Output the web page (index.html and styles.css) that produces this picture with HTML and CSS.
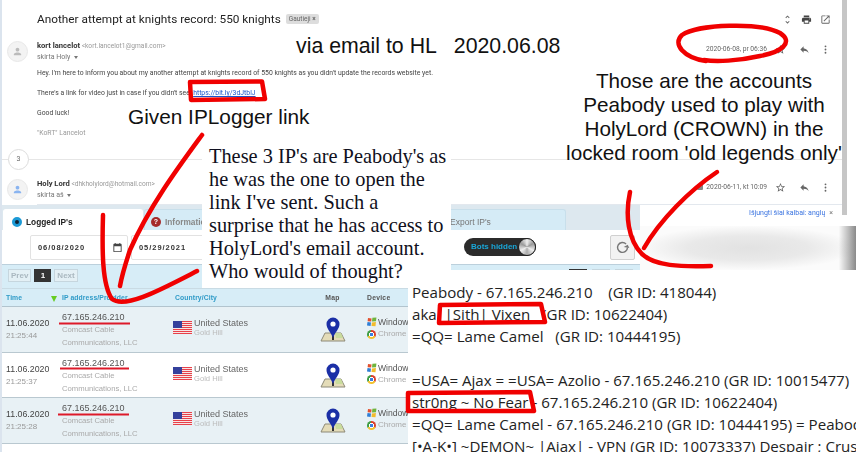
FILE: index.html
```html
<!DOCTYPE html>
<html lang="en">
<head>
    <meta charset="UTF-8">
    <title>Given IPLogger link</title>
    <link rel="stylesheet" href="styles.css">
</head>
<body>
    <svg class="sprites" width="0" height="0">
        <symbol id="i-star" viewBox="0 0 24 24"><path d="M22 9.24l-7.19-.62L12 2 9.19 8.63 2 9.24l5.46 4.73L5.82 21 12 17.27 18.18 21l-1.63-7.03L22 9.24zM12 15.4l-3.76 2.27 1-4.28-3.32-2.88 4.38-.38L12 6.1l1.71 4.04 4.38.38-3.32 2.88 1 4.28L12 15.4z"/></symbol>
        <symbol id="i-reply" viewBox="0 0 24 24"><path d="M10 9V5l-7 7 7 7v-4.1c5 0 8.5 1.6 11 5.1-1-5-4-10-11-11z"/></symbol>
        <symbol id="i-more" viewBox="0 0 24 24"><circle cx="12" cy="5" r="2"/><circle cx="12" cy="12" r="2"/><circle cx="12" cy="19" r="2"/></symbol>
        <symbol id="i-print" viewBox="0 0 24 24"><path d="M19 8H5c-1.66 0-3 1.34-3 3v6h4v4h12v-4h4v-6c0-1.66-1.34-3-3-3zm-3 11H8v-5h8v5zm3-7c-.55 0-1-.45-1-1s.45-1 1-1 1 .45 1 1-.45 1-1 1zm-1-9H6v4h12V3z"/></symbol>
        <symbol id="i-open" viewBox="0 0 24 24"><path d="M19 19H5V5h7V3H5c-1.11 0-2 .9-2 2v14c0 1.1.89 2 2 2h14c1.1 0 2-.9 2-2v-7h-2v7zM14 3v2h3.59l-9.83 9.83 1.41 1.41L19 6.41V10h2V3h-7z"/></symbol>
        <symbol id="i-unfold" viewBox="0 0 24 24"><path d="M12 5.83L15.17 9l1.41-1.41L12 3 7.41 7.59 8.83 9 12 5.83zm0 12.34L8.83 15l-1.41 1.41L12 21l4.59-4.59L15.17 15 12 18.17z"/></symbol>
        <symbol id="i-person" viewBox="0 0 24 24"><path d="M12 12c2.21 0 4-1.79 4-4s-1.79-4-4-4-4 1.79-4 4 1.79 4 4 4zm0 2c-2.67 0-8 1.34-8 4v2h16v-2c0-2.66-5.33-4-8-4z"/></symbol>
        <symbol id="i-calendar" viewBox="0 0 24 24"><path d="M19 4h-1V2h-2v2H8V2H6v2H5c-1.1 0-2 .9-2 2v14c0 1.1.9 2 2 2h14c1.1 0 2-.9 2-2V6c0-1.1-.9-2-2-2zm0 16H5V9h14v11z"/></symbol>
        <symbol id="i-pin" viewBox="0 0 26 26">
            <path d="M5 16 L21 16 L25 24 L1 24 Z" fill="#e4dcb8" stroke="#8d8a78" stroke-width="1"/>
            <path d="M15 16 L21 16 L23 21 L16 21 Z" fill="#c9dc9c"/>
            <path d="M12 19 h2 v4 h-2 z" fill="#333"/>
            <path d="M13 21 C11 15 6.500 12 6.500 7 A6.500 6.500 0 0 1 19.500 7 C19.500 12 15 15 13 21 Z" fill="#1b2fa6"/>
            <circle cx="13" cy="7" r="2.600" fill="#fff"/>
        </symbol>
        <symbol id="i-windows" viewBox="0 0 10 10">
            <path d="M1 1 L4.600 1.400 L4.200 4.600 L.6 4.200 Z" fill="#e2502e"/>
            <path d="M5.400 .8 L9.400 .4 L9 4.200 L5 4.600 Z" fill="#6fb43c"/>
            <path d="M.5 5 L4 5.400 L3.600 9 L0 8.600 Z" fill="#2f7fd6"/>
            <path d="M4.900 5.400 L8.900 5 L8.500 9.200 L4.500 9 Z" fill="#f2bb2c"/>
        </symbol>
    </svg>

    <main class="desktop">
        <section class="mail">
            <div class="subject-row">
                <h1 class="subject">Another attempt at knights record: 550 knights</h1>
                <span class="chip">Gautieji <b>×</b></span>
                <div class="top-icons">
                    <svg class="icon"><use href="#i-unfold"/></svg>
                    <svg class="icon dark"><use href="#i-print"/></svg>
                    <svg class="icon"><use href="#i-open"/></svg>
                </div>
            </div>

            <div class="message">
                <div class="avatar"><svg class="icon grey"><use href="#i-person"/></svg></div>
                <div class="message-main">
                    <div class="sender"><b>kort lancelot</b> <span>&lt;kort.lancelot1@gmail.com&gt;</span></div>
                    <div class="recipient">skirta Holy <i class="caret"></i></div>
                </div>
                <div class="message-tools">
                    <span class="msg-date">2020-06-08, pr 06:36</span>
                    <svg class="icon star"><use href="#i-star"/></svg>
                    <svg class="icon"><use href="#i-reply"/></svg>
                    <svg class="icon"><use href="#i-more"/></svg>
                </div>
            </div>

            <div class="mail-body">
                <p>Hey. I'm here to inform you about my another attempt at knights record of 550 knights as you didn't update the records website yet.</p>
                <p>There's a link for video just in case if you didn't see: <a href="#">https://bit.ly/3dJtblJ</a></p>
                <p>Good luck!</p>
                <p class="signature">"KoRT" Lancelot</p>
            </div>

            <div class="collapsed"><span class="count">3</span></div>

            <div class="message second">
                <div class="avatar"><svg class="icon blue"><use href="#i-person"/></svg></div>
                <div class="message-main">
                    <div class="sender"><b>Holy Lord</b> <span>&lt;dhkholylord@hotmail.com&gt;</span></div>
                    <div class="recipient">skirta aš <i class="caret"></i></div>
                </div>
                <div class="message-tools">
                    <i class="attachment"></i>
                    <span class="msg-date">2020-06-11, kt 10:09</span>
                    <svg class="icon star"><use href="#i-star"/></svg>
                    <svg class="icon"><use href="#i-reply"/></svg>
                    <svg class="icon"><use href="#i-more"/></svg>
                </div>
            </div>

            <div class="translate-bar"><a href="#">Išjungti šiai kalbai: anglų</a><span>×</span></div>
            <div class="scrollbar"></div>
        </section>

        <div class="mail-shadow"></div>

        <section class="logger">
            <div class="tabs">
                <div class="tab active"><span class="tab-dot"></span>Logged IP's</div>
                <div class="tab info"><span class="tab-q">?</span>Information</div>
                <div class="tab export">Export IP's</div>
            </div>
            <div class="filters">
                <div class="date-input">06/08/2020 <svg class="icon dark"><use href="#i-calendar"/></svg></div>
                <div class="date-input">05/29/2021</div>
                <div class="toggle">Bots hidden<span class="knob"></span></div>
                <div class="refresh">
                    <svg viewBox="0 0 24 24"><path d="M19 12a7 7 0 1 1-2-5" fill="none" stroke="#777" stroke-width="2"/><path d="M14 12 L22 12 L19 8 Z" fill="#777" transform="rotate(10 18 10)"/></svg>
                </div>
            </div>
            <div class="pager">
                <span class="page-btn">Prev</span>
                <span class="page-btn current">1</span>
                <span class="page-btn">Next</span>
                <div class="pager-right">
                    <span class="page-btn current"></span>
                    <span class="page-btn"></span>
                    <span class="page-btn"></span>
                </div>
            </div>
            <div class="ip-row ip-head">
                <div class="time-head">Time <i class="sort"></i></div>
                <div>IP address/Provider</div>
                <div class="country-head">Country/City</div>
                <div class="map-cell dark-head">Map</div>
                <div class="device-cell dark-head">Device</div>
            </div>

            <div class="ip-row shaded">
                <div><div class="date">11.06.2020</div><div class="clock">21:25:44</div></div>
                <div><div class="ip">67.165.246.210</div><div class="isp">Comcast Cable</div><div class="isp">Communications, LLC</div></div>
                <div class="country"><span class="flag"></span><div><div class="country-name">United States</div><div class="city">Gold Hill</div></div></div>
                <div class="map-cell"><svg class="pin"><use href="#i-pin"/></svg></div>
                <div class="device-cell"><div class="os"><svg class="win"><use href="#i-windows"/></svg>Windows</div><div class="browser"><span class="chrome"></span>Chrome</div></div>
            </div>
            <div class="ip-row">
                <div><div class="date">11.06.2020</div><div class="clock">21:25:37</div></div>
                <div><div class="ip">67.165.246.210</div><div class="isp">Comcast Cable</div><div class="isp">Communications, LLC</div></div>
                <div class="country"><span class="flag"></span><div><div class="country-name">United States</div><div class="city">Gold Hill</div></div></div>
                <div class="map-cell"><svg class="pin"><use href="#i-pin"/></svg></div>
                <div class="device-cell"><div class="os"><svg class="win"><use href="#i-windows"/></svg>Windows</div><div class="browser"><span class="chrome"></span>Chrome</div></div>
            </div>
            <div class="ip-row shaded">
                <div><div class="date">11.06.2020</div><div class="clock">21:25:28</div></div>
                <div><div class="ip">67.165.246.210</div><div class="isp">Comcast Cable</div><div class="isp">Communications, LLC</div></div>
                <div class="country"><span class="flag"></span><div><div class="country-name">United States</div><div class="city">Gold Hill</div></div></div>
                <div class="map-cell"><svg class="pin"><use href="#i-pin"/></svg></div>
                <div class="device-cell"><div class="os"><svg class="win"><use href="#i-windows"/></svg>Windows</div><div class="browser"><span class="chrome"></span>Chrome</div></div>
            </div>
        </section>

        <aside class="note">These 3 IP's are Peabody's as<br>he was the one to open the<br>link I've sent. Such a<br>surprise that he has access to<br>HolyLord's email account.<br>Who would of thought?</aside>

        <section class="accounts">
            <p>Peabody - 67.165.246.210 &nbsp;&nbsp; (GR ID: 418044)</p>
            <p>aka &nbsp;|Sith| Vixen &nbsp; (GR ID: 10622404)</p>
            <p>=QQ= Lame Camel &nbsp; (GR ID: 10444195)</p>
            <p>&nbsp;</p>
            <p>=USA= Ajax = =USA= Azolio - 67.165.246.210 (GR ID: 10015477)</p>
            <p>str0ng ~ No Fear - 67.165.246.210 (GR ID: 10622404)</p>
            <p>=QQ= Lame Camel - 67.165.246.210 (GR ID: 10444195) = Peabody</p>
            <p>[•A-K•] ~DEMON~ |Ajax| - VPN (GR ID: 10073337) Despair ; Crusader</p>
        </section>

        <div class="caption caption-mail">via email to HL &nbsp; 2020.06.08</div>
        <div class="caption caption-link">Given IPLogger link</div>
        <div class="caption caption-accounts">Those are the accounts<br>Peabody used to play with<br>HolyLord (CROWN) in the<br>locked room 'old legends only'</div>

        <svg class="marks" viewBox="0 0 856 452">
            <g class="thick">
                <path d="M706 61 C684 58 672 44 682 35 C698 24 760 22 780 33 C794 42 782 52 760 56 C738 61 716 62 704 60"/>
                <path d="M190 82 L262 81.500 L265 99 L191 100 Z"/>
                <path d="M202 135 C180 165 150 205 130 250 C126 262 122 275 120 286"/>
                <path d="M103 215 C102 250 102 285 112 299 C125 309 160 290 197 271"/>
                <path d="M717 172 C690 190 660 220 644 248"/>
                <path d="M630 192 C625 215 628 240 642 254 C655 266 680 267 711 266"/>
                <path d="M440 305 L541 304 L545 322 L439 323 Z"/>
                <path d="M408 393 L530 392 L534 411 L408 411 Z"/>
            </g>
            <g class="thin">
                <path d="M59 323.500 L130 323.500"/>
                <path d="M60 368.500 L129 368.500"/>
                <path d="M58 414.500 L129 414.500"/>
            </g>
        </svg>
    </main>
</body>
</html>
```

FILE: styles.css
```css
* {
    box-sizing: border-box;
}

body {
    margin: 0;
    background-color: white;
    font-family: Roboto, Arial, sans-serif;
}

.sprites {
    position: absolute;
}

.desktop {
    position: relative;
    width: 856px;
    height: 452px;
    overflow: hidden;
    background-color: white;
}

.icon {
    width: 11px;
    height: 11px;
    fill: #666;
    flex: none;
}

.icon.dark {
    fill: #444;
}

.icon.grey {
    fill: #bbb;
}

.icon.blue {
    fill: #8ab4f0;
}

.icon.star {
    margin-right: 3px;
}

/* Mail window */
.mail {
    position: absolute;
    left: 0;
    top: 0;
    width: 856px;
    height: 226px;
    padding: 1px 0 0 37px;
    border-left: 2px solid #dbe4ee;
    background-color: white;
    filter: blur(0.4px);
}

.subject-row {
    display: flex;
    align-items: center;
    height: 36px;
    margin-left: -2px;
    padding-right: 25px;
}

.subject {
    margin: 0;
    font-size: 11.8px;
    font-weight: 400;
    color: #222;
}

.chip {
    margin-left: 5px;
    padding: 1px 3px;
    background-color: #ddd;
    border-radius: 2px;
    font-size: 6.5px;
    color: #666;
}

.top-icons {
    display: flex;
    gap: 8px;
    margin-left: auto;
}

.message {
    position: relative;
    display: flex;
    height: 26px;
    margin-left: -2px;
    padding-top: 4px;
    padding-right: 25px;
}

.avatar {
    position: absolute;
    left: -30px;
    top: 4px;
    width: 21px;
    height: 21px;
    border-radius: 50%;
    background-color: #f3f3f3;
    border: 1px solid #e8e8e8;
    display: flex;
    align-items: center;
    justify-content: center;
}

.sender {
    font-size: 6.6px;
    line-height: 10px;
    color: #999;
}

.sender b {
    font-size: 7.6px;
    color: #333;
}

.recipient {
    font-size: 7px;
    line-height: 12px;
    color: #777;
}

.caret {
    display: inline-block;
    margin-left: 2px;
    border: 2px solid transparent;
    border-top: 3px solid #777;
    border-bottom: 0;
    vertical-align: middle;
}

.message-tools {
    display: flex;
    align-items: center;
    gap: 10px;
    height: 16px;
    margin-left: auto;
}

.msg-date {
    margin-right: -2px;
    font-size: 6.7px;
    color: #666;
}

.attachment {
    width: 6px;
    height: 6px;
    margin-right: -7px;
    border-radius: 1px;
    background-color: #888;
}

.mail-body {
    height: 92px;
    margin-left: -2px;
    padding-top: 5px;
    font-size: 6.85px;
    color: #444;
}

.mail-body p {
    margin: 0 0 10px;
    line-height: 10px;
}

.mail-body a {
    color: #1a55cc;
}

.signature {
    color: #999;
}

.collapsed {
    position: relative;
    height: 20px;
    margin-left: -37px;
    margin-right: 14px;
}

.collapsed::before {
    content: "";
    position: absolute;
    left: 0;
    right: 0;
    top: 4px;
    border-top: 1px solid #e6e6e6;
}

.count {
    position: absolute;
    left: 6px;
    top: -6px;
    width: 21px;
    height: 21px;
    border: 1px solid #ddd;
    border-radius: 50%;
    background-color: white;
    font-size: 7px;
    line-height: 19px;
    text-align: center;
    color: #666;
}

.message.second {
    height: 30px;
    border-bottom: 1px solid #e3e8ee;
    margin-right: 14px;
    padding-right: 11px;
}

.translate-bar {
    display: flex;
    justify-content: flex-end;
    align-items: center;
    gap: 4px;
    height: 14px;
    margin: 0 23px 0 0;
    padding-top: 1px;
    font-size: 7px;
    color: #777;
}

.translate-bar a {
    color: #3b74e0;
    text-decoration: none;
}

.scrollbar {
    position: absolute;
    right: 9px;
    top: 0;
    width: 5px;
    height: 215px;
    background-color: #c6c6c6;
}

.mail-shadow {
    position: absolute;
    left: 640px;
    top: 226px;
    width: 216px;
    height: 44px;
    background:
        linear-gradient(90deg, transparent 92%, #8a8a8a 100%),
        radial-gradient(ellipse 110px 22px at 50% 50%, #e2e2e2 0%, #e9e9e9 55%, #fbfbfb 100%);
}

/* IP logger window */
.logger {
    position: absolute;
    left: 0;
    top: 205px;
    width: 640px;
    height: 247px;
    background-color: white;
    border-left: 2px solid #dbe4ee;
    font-family: "Liberation Sans", Arial, sans-serif;
    filter: blur(0.4px);
}

.tabs {
    display: flex;
    gap: 1px;
    height: 25px;
    padding: 4px 0 0 1px;
    background-color: #dde8ef;
}

.tab {
    display: flex;
    align-items: center;
    padding-top: 3px;
    padding-left: 8px;
    border: 1px solid #c8dfeb;
    border-bottom: 0;
    border-radius: 3px 3px 0 0;
    background-color: #d5ebf6;
    font-size: 8.3px;
    font-weight: bold;
    color: #888;
}

.tab.active {
    width: 140px;
    background-color: white;
    color: #222;
    border-color: white;
}

.tab.info {
    width: 260px;
    padding-left: 6px;
}

.tab.export {
    width: 161px;
    padding-left: 44px;
    font-size: 8.5px;
    font-weight: normal;
    color: #777;
}

.tab-dot {
    width: 10px;
    height: 10px;
    margin-right: 4px;
    border-radius: 50%;
    border: 3px solid #1c9ad6;
    background-color: #123;
}

.tab-q {
    width: 10px;
    height: 10px;
    margin-right: 4px;
    border-radius: 50%;
    background-color: #a52a2a;
    color: white;
    font-size: 7px;
    line-height: 10px;
    text-align: center;
}

.filters {
    display: flex;
    align-items: center;
    height: 35px;
    padding-left: 28px;
    border-bottom: 1px solid #bcd0dc;
}

.date-input {
    display: flex;
    align-items: center;
    justify-content: space-between;
    width: 98px;
    height: 25px;
    margin-right: 3px;
    padding: 0 4px 0 7px;
    border: 1px solid #e2e2e2;
    border-radius: 2px;
    font-size: 7.5px;
    font-weight: bold;
    letter-spacing: 0.95px;
    color: #333;
}

.toggle {
    position: relative;
    width: 72px;
    height: 18px;
    margin-left: 232px;
    padding-left: 7px;
    border-radius: 9px;
    background-color: #2b2b2b;
    font-size: 8px;
    font-weight: bold;
    line-height: 18px;
    color: #19a6d8;
}

.knob {
    position: absolute;
    right: 0;
    top: 0;
    width: 18px;
    height: 18px;
    border: 1px solid #222;
    border-radius: 50%;
    background: conic-gradient(#eee, #999, #eee, #aaa, #eee, #999, #eee);
}

.refresh {
    width: 25px;
    height: 25px;
    margin-left: 74px;
    padding: 3px;
    border: 1px solid #d0d0d0;
    border-radius: 2px;
    background-color: #f2f2f2;
}

.pager {
    display: flex;
    align-items: flex-start;
    gap: 3px;
    height: 23px;
    padding: 4px 0 0 6px;
    background-color: #d7edf7;
}

.page-btn {
    min-width: 21px;
    height: 13px;
    padding: 0 2px;
    border: 1px solid #c6d6de;
    background-color: #e4f0f5;
    font-size: 8px;
    font-weight: bold;
    line-height: 11px;
    text-align: center;
    color: #aab8c0;
}

.page-btn.current {
    min-width: 17px;
    border-color: #333;
    background-color: #333;
    color: white;
}

.pager-right {
    display: flex;
    gap: 5px;
    margin-left: 488px;
}

.pager-right .page-btn {
    width: 18px;
    min-width: 18px;
}

.ip-row {
    display: grid;
    grid-template-columns: 56px 111px 132px 55px 1fr;
    align-items: start;
    height: 45.5px;
    padding-left: 4px;
    border-bottom: 1px solid #b9c8d0;
    background-color: white;
}

.ip-row.shaded {
    background-color: #e8f1f5;
}

.ip-head {
    height: 19px;
    align-items: center;
    background-color: #d7edf7;
    border-top: 1px solid #c9dbe4;
    border-bottom-color: #b2c4ce;
    font-size: 6.8px;
    font-weight: bold;
    letter-spacing: 0.1px;
    color: #2f9bc8;
}

.time-head {
    display: flex;
    justify-content: space-between;
    padding-right: 5px;
}

.country-head {
    padding-left: 2px;
}

.sort {
    width: 0;
    height: 0;
    margin-top: 2px;
    border: 3px solid transparent;
    border-top: 6px solid #66cc22;
    border-bottom: 0;
}

.dark-head {
    letter-spacing: 0.25px;
    color: #555;
}

.date {
    margin-top: 10px;
    font-size: 8.8px;
    line-height: 12px;
    color: #444;
}

.clock {
    margin-top: 1px;
    font-size: 8px;
    line-height: 11px;
    color: #999;
}

.ip {
    margin-top: 4px;
    font-size: 9px;
    line-height: 12px;
    color: #555;
}

.isp {
    font-size: 7.7px;
    line-height: 13px;
    color: #aaa;
}

.country {
    display: flex;
    gap: 2px;
    margin-top: 11px;
}

.flag {
    position: relative;
    width: 19px;
    height: 13px;
    margin-top: 3px;
    background: repeating-linear-gradient(180deg, #e8414a 0, #e8414a 1px, #f6e6e6 1px, #f6e6e6 2px);
}

.flag::before {
    content: "";
    position: absolute;
    left: 0;
    top: 0;
    width: 9px;
    height: 7px;
    background-color: #34409c;
}

.country-name {
    font-size: 9px;
    line-height: 10px;
    color: #666;
}

.city {
    font-size: 7.6px;
    line-height: 10px;
    color: #bbb;
}

.map-cell {
    text-align: center;
}

.pin {
    width: 26px;
    height: 26px;
    margin-top: 10px;
}

.device-cell {
    padding-left: 7px;
}

.os {
    display: flex;
    align-items: center;
    gap: 1px;
    margin-top: 10px;
    font-size: 8.6px;
    line-height: 10px;
    color: #555;
}

.win {
    width: 10px;
    height: 10px;
    flex: none;
}

.browser {
    display: flex;
    align-items: center;
    gap: 2px;
    margin-top: 2px;
    font-size: 8px;
    line-height: 10px;
    color: #aaa;
}

.chrome {
    width: 9px;
    height: 9px;
    flex: none;
    border-radius: 50%;
    background: radial-gradient(circle, #3a7fe0 0 25%, #fff 26% 38%, transparent 39%), conic-gradient(#d9402f 0 33%, #f2c230 33% 66%, #3f9e45 66%);
}

/* Collage panels */
.note {
    position: absolute;
    left: 202px;
    top: 143px;
    width: 249px;
    height: 145px;
    padding: 2px 0 0 7px;
    background-color: white;
    font-family: "Liberation Serif", "Times New Roman", serif;
    font-size: 20.35px;
    line-height: 23px;
    white-space: nowrap;
    color: #101020;
}

.accounts {
    position: absolute;
    left: 408px;
    top: 270px;
    width: 448px;
    height: 182px;
    padding: 11px 0 0 4px;
    overflow: hidden;
    background-color: white;
    font-family: "Open Sans", sans-serif;
    font-size: 15.1px;
    white-space: nowrap;
    color: #222;
}

.accounts p {
    margin: 0;
    line-height: 22px;
}

.caption {
    position: absolute;
    font-family: "Liberation Sans", Arial, sans-serif;
    font-size: 20.7px;
    color: #111;
    white-space: nowrap;
}

.caption-mail {
    left: 296px;
    top: 34px;
    font-size: 21.3px;
}

.caption-link {
    left: 128px;
    top: 105px;
    font-size: 20.8px;
}

.caption-accounts {
    left: 564px;
    top: 69px;
    width: 280px;
    line-height: 24px;
    text-align: center;
}

.marks {
    position: absolute;
    left: 0;
    top: 0;
    width: 856px;
    height: 452px;
    fill: none;
}

.thick {
    stroke: #f00000;
    stroke-width: 4.5;
    stroke-linecap: round;
    stroke-linejoin: round;
}

.thin {
    stroke: #dd1a2a;
    stroke-width: 2;
}
```
